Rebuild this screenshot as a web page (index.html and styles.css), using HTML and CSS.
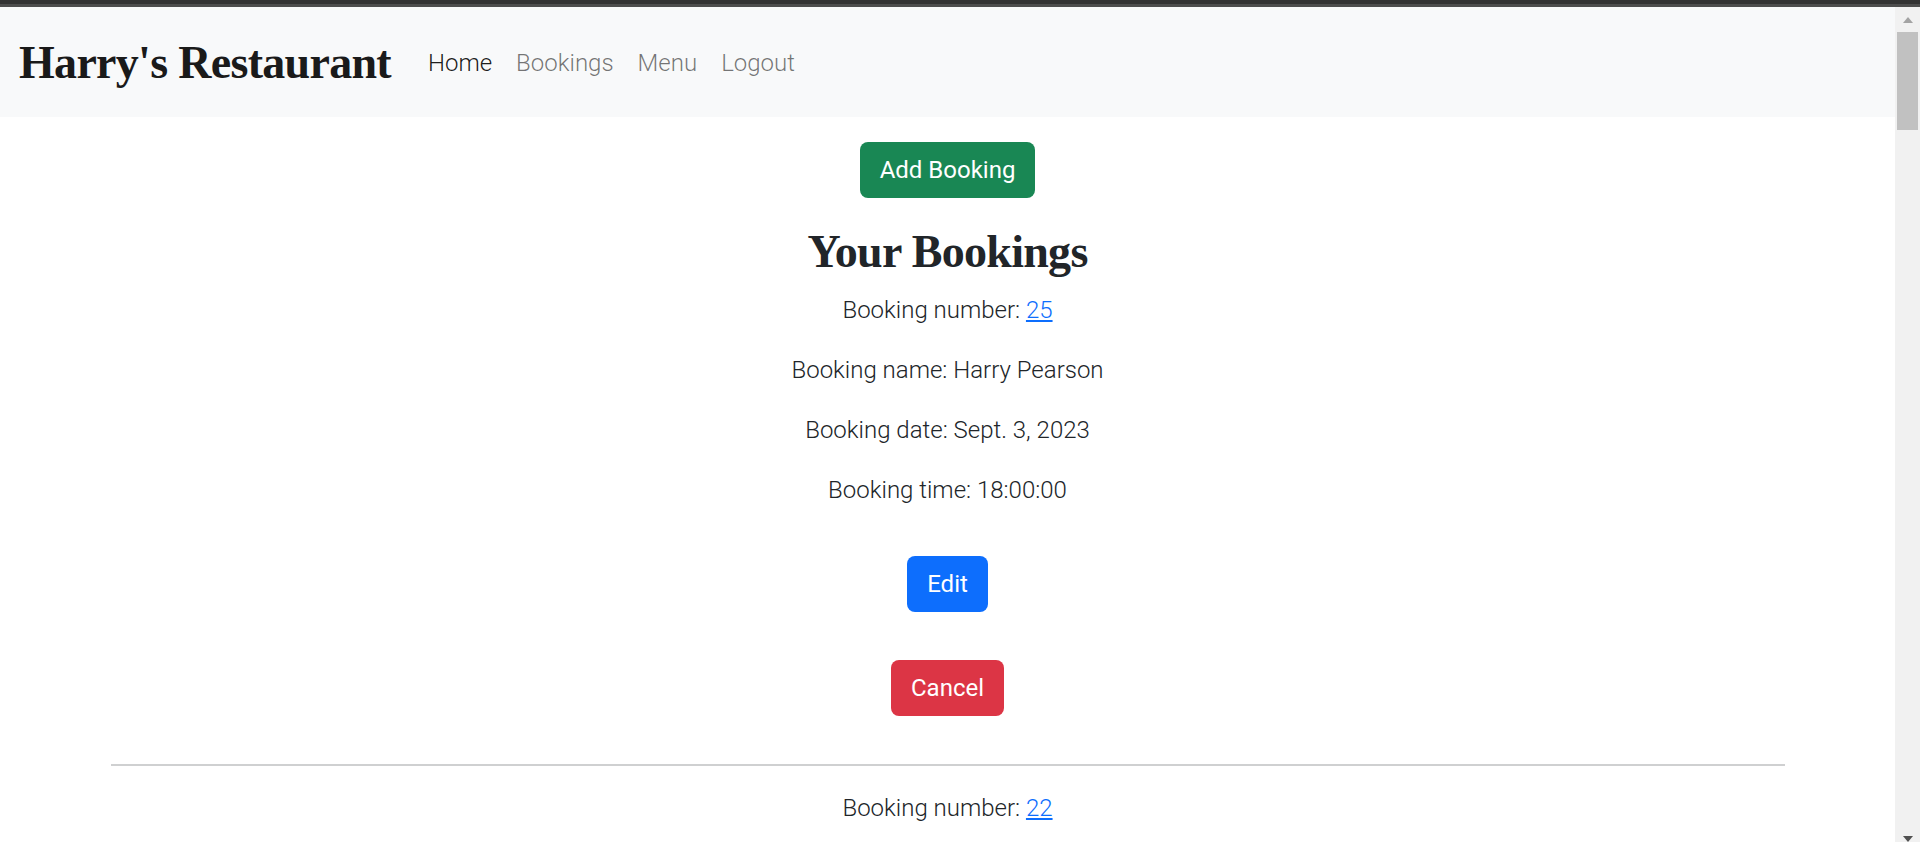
FILE: index.html
```html
<!DOCTYPE html>
<html lang="en">
<head>
<meta charset="utf-8">
<title>Harry's Restaurant - Bookings</title>
<link rel="stylesheet" href="styles.css">
</head>
<body>
<div class="topbar"></div>
<div class="window">
  <div class="page">
    <nav class="navbar">
      <a class="brand" href="#">Harry's Restaurant</a>
      <ul class="nav">
        <li><a class="nav-link active" href="#">Home</a></li>
        <li><a class="nav-link" href="#">Bookings</a></li>
        <li><a class="nav-link" href="#">Menu</a></li>
        <li><a class="nav-link" href="#">Logout</a></li>
      </ul>
    </nav>
    <main class="container">
      <a class="btn btn-success" href="#">Add Booking</a>
      <h1 class="title">Your Bookings</h1>
      <section class="booking">
        <p>Booking number: <a class="link" href="#">25</a></p>
        <p>Booking name: Harry Pearson</p>
        <p>Booking date: Sept. 3, 2023</p>
        <p>Booking time: 18:00:00</p>
        <div class="actions">
          <a class="btn btn-primary" href="#">Edit</a>
          <a class="btn btn-danger" href="#">Cancel</a>
        </div>
      </section>
      <hr class="divider">
      <section class="booking">
        <p>Booking number: <a class="link" href="#">22</a></p>
      </section>
    </main>
  </div>
  <div class="scrollbar">
    <span class="arrow-up"></span>
    <span class="thumb"></span>
    <span class="spacer"></span>
    <span class="arrow-down"></span>
  </div>
</div>
</body>
</html>
```

FILE: styles.css
```css
* { box-sizing: border-box; }
html, body {
  margin: 0;
  padding: 0;
  height: 842px;
  overflow: hidden;
}
body {
  display: flex;
  flex-direction: column;
  font-family: Roboto, "Liberation Sans", sans-serif;
  font-weight: 300;
  color: #212529;
  background: #fff;
}
.topbar {
  height: 7px;
  background: #333333;
  border-bottom: 3px solid #4d4d4d;
  flex: none;
}
.window {
  flex: 1;
  display: flex;
  min-height: 0;
}
.page {
  flex: 1;
  min-width: 0;
  overflow: hidden;
}
.navbar {
  height: 110px;
  background: #f8f9fa;
  display: flex;
  align-items: center;
  padding: 2px 19px 0;
}
.brand {
  font-family: "Liberation Serif", serif;
  font-weight: 700;
  font-size: 46px;
  line-height: 58px;
  color: #1a1a1a;
  text-decoration: none;
  margin-right: 25px;
  letter-spacing: -0.7px;
}
.nav {
  display: flex;
  list-style: none;
  margin: 0;
  padding: 0;
  margin-top: -1px;
}
.nav-link {
  display: block;
  padding: 0 12px;
  font-size: 24px;
  line-height: 34px;
  color: rgba(0, 0, 0, 0.55);
  text-decoration: none;
}
.nav-link.active { color: rgba(0, 0, 0, 0.9); }

.container {
  width: 1674px;
  margin: 0 auto;
  padding-top: 25px;
  display: flex;
  flex-direction: column;
  align-items: center;
  text-align: center;
}
.btn {
  display: inline-flex;
  align-items: center;
  justify-content: center;
  height: 56px;
  padding: 0 20px;
  border-radius: 8px;
  font-family: Roboto, "Liberation Sans", sans-serif;
  font-weight: 400;
  font-size: 24px;
  color: #fff;
  text-decoration: none;
}
.btn-success { background: #198754; }
.btn-primary { background: #0d6efd; }
.btn-danger { background: #dc3545; }

.title {
  font-family: "Liberation Serif", serif;
  font-weight: 700;
  font-size: 46px;
  letter-spacing: -0.7px;
  line-height: 58px;
  margin: 25px 0 12px;
  color: #212529;
}
.booking {
  display: flex;
  flex-direction: column;
  align-items: center;
  gap: 26px;
}
.booking p {
  margin: 0;
  font-size: 24px;
  line-height: 34px;
}
.link {
  color: #0d6efd;
  text-decoration: underline;
}
.actions {
  display: flex;
  flex-direction: column;
  align-items: center;
  gap: 48px;
  margin-top: 23px;
}
.divider {
  width: 100%;
  margin: 48px 0 25px;
  border: 0;
  border-top: 2px solid #cfd0d1;
}

.scrollbar {
  width: 25px;
  flex: none;
  background: #f1f1f1;
  display: flex;
  flex-direction: column;
  align-items: center;
}
.arrow-up {
  margin-top: 10px;
  width: 0;
  height: 0;
  border-left: 5.5px solid transparent;
  border-right: 5.5px solid transparent;
  border-bottom: 6px solid #a3a3a3;
}
.thumb {
  margin-top: 9px;
  width: 21px;
  height: 98px;
  background: #c1c1c1;
}
.spacer { flex: 1; }
.arrow-down {
  width: 0;
  height: 0;
  border-left: 5.5px solid transparent;
  border-right: 5.5px solid transparent;
  border-top: 6px solid #505050;
}
```
